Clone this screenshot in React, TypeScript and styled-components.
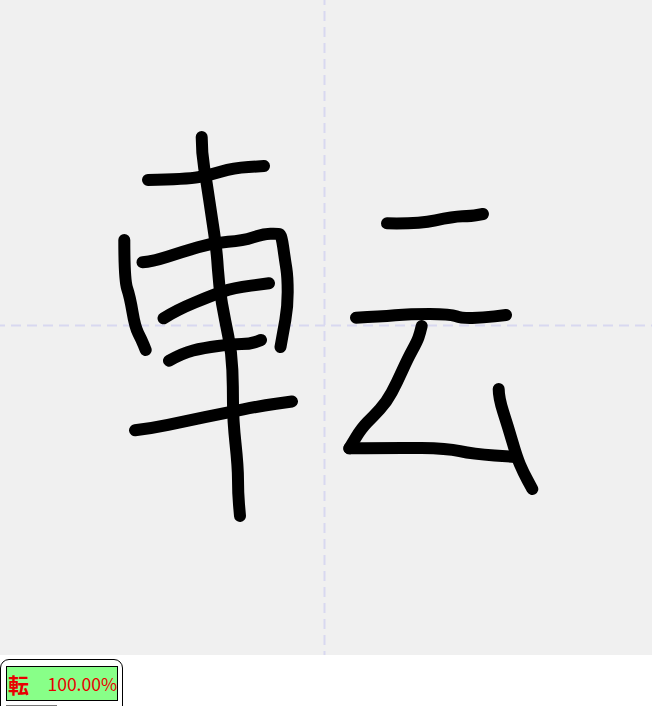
import React from "react";
import styled, { createGlobalStyle } from "styled-components";

const GlobalStyle = createGlobalStyle`
  html, body {
    margin: 0;
    padding: 0;
    background: #fff;
    overflow: hidden;
  }
`;

const Page = styled.div`
  width: 652px;
  height: 706px;
  overflow: hidden;
  display: flex;
  flex-direction: column;
`;

const Canvas = styled.div`
  width: 652px;
  height: 655px;
  flex: none;
  background: #f0f0f0;
`;

const CanvasSvg = styled.svg`
  display: block;
  width: 100%;
  height: 100%;
`;

const Results = styled.div`
  display: flex;
  padding-top: 4px;
`;

const ResultCard = styled.div`
  box-sizing: border-box;
  width: 123px;
  height: 60px;
  flex: none;
  padding: 6px 4px 0 5px;
  border: 1.5px solid #000;
  border-radius: 9px;
  background: #fff;
`;

const Score = styled.div`
  box-sizing: border-box;
  height: 35px;
  display: flex;
  align-items: center;
  justify-content: space-between;
  padding: 0 0 0 1px;
  border: 1px solid #000;
  background: #88ff88;
  color: #e80000;
  font-family: "Noto Sans CJK JP", "Liberation Sans", sans-serif;
  white-space: nowrap;
`;

const Kanji = styled.span`
  font-size: 21px;
  font-weight: 700;
`;

const Percent = styled.span`
  font-size: 17.5px;
`;

const Bar = styled.div`
  width: 51px;
  height: 2px;
  margin-top: 4px;
  background: #777;
`;

type Point = [number, number];

// the hand drawn strokes, as sampled pointer positions
const strokes: Point[][] = [
  [[201.7, 137], [201.7, 153], [206.7, 183], [211.7, 217], [216.7, 250], [219, 287], [225, 320], [231.7, 353], [233, 387], [233, 420], [238, 467], [238, 493], [240, 516]],
  [[148, 180], [187, 179.3], [210, 175], [233, 168], [264, 166]],
  [[124.3, 240], [124.3, 280], [130, 297], [135, 327], [141.7, 340], [145.7, 350]],
  [[142.5, 262.3], [151.7, 261.7], [183, 251.7], [213, 243], [243, 240.7], [263, 234], [278, 233.5], [281.5, 235], [285, 260], [287.7, 277], [287.7, 307], [283, 333], [280.5, 347]],
  [[163.5, 318.3], [176.7, 310], [213, 295], [233, 288], [269, 283.3]],
  [[169, 360.7], [183, 353], [203, 348], [233, 344], [250, 344], [261, 340]],
  [[135, 430.3], [153, 428], [183, 421.7], [226.7, 412.7], [260, 406], [292, 401.5]],
  [[387, 223.3], [418, 224], [453, 216.7], [471.7, 216], [483, 214]],
  [[356, 317.7], [380, 316.7], [410, 314], [450, 314], [461.7, 318.3], [483, 317.7], [506, 315]],
  [[421.7, 326], [420, 333.3], [417, 341.7], [408, 358], [396.7, 383], [386.7, 401.7], [373, 416.7], [361.7, 428], [349.3, 448.3]],
  [[349.3, 448.3], [396.7, 447.7], [446.7, 448.3], [473, 454], [516, 457]],
  [[498.7, 389], [498.7, 398], [508, 426.7], [516.7, 456.7], [523, 471.7], [532.3, 489]],
];

// run the line through the midpoints so corners come out soft
const toPath = (points: Point[]) => {
  let d = `M${points[0][0]} ${points[0][1]}`;
  for (let i = 1; i < points.length - 1; i++) {
    const [x, y] = points[i];
    const [nx, ny] = points[i + 1];
    d += ` Q${x} ${y} ${(x + nx) / 2} ${(y + ny) / 2}`;
  }
  const last = points[points.length - 1];
  return `${d} L${last[0]} ${last[1]}`;
};

const App: React.FC = () => {
  return (
    <Page>
      <GlobalStyle />
      <Canvas>
        <CanvasSvg viewBox="0 0 652 655">
          <g stroke="#d8d8f0" strokeWidth="2" strokeDasharray="10 6" strokeDashoffset="5">
            <line x1="0" y1="325.5" x2="652" y2="325.5" />
            <line x1="324.5" y1="0" x2="324.5" y2="655" />
          </g>
          <g fill="none" stroke="#000" strokeWidth="12" strokeLinecap="round" strokeLinejoin="round">
            {strokes.map((points, i) => (
              <path key={i} d={toPath(points)} />
            ))}
          </g>
        </CanvasSvg>
      </Canvas>
      <Results>
        <ResultCard>
          <Score>
            <Kanji>転</Kanji>
            <Percent>100.00%</Percent>
          </Score>
          <Bar />
        </ResultCard>
      </Results>
    </Page>
  );
};

export default App;
